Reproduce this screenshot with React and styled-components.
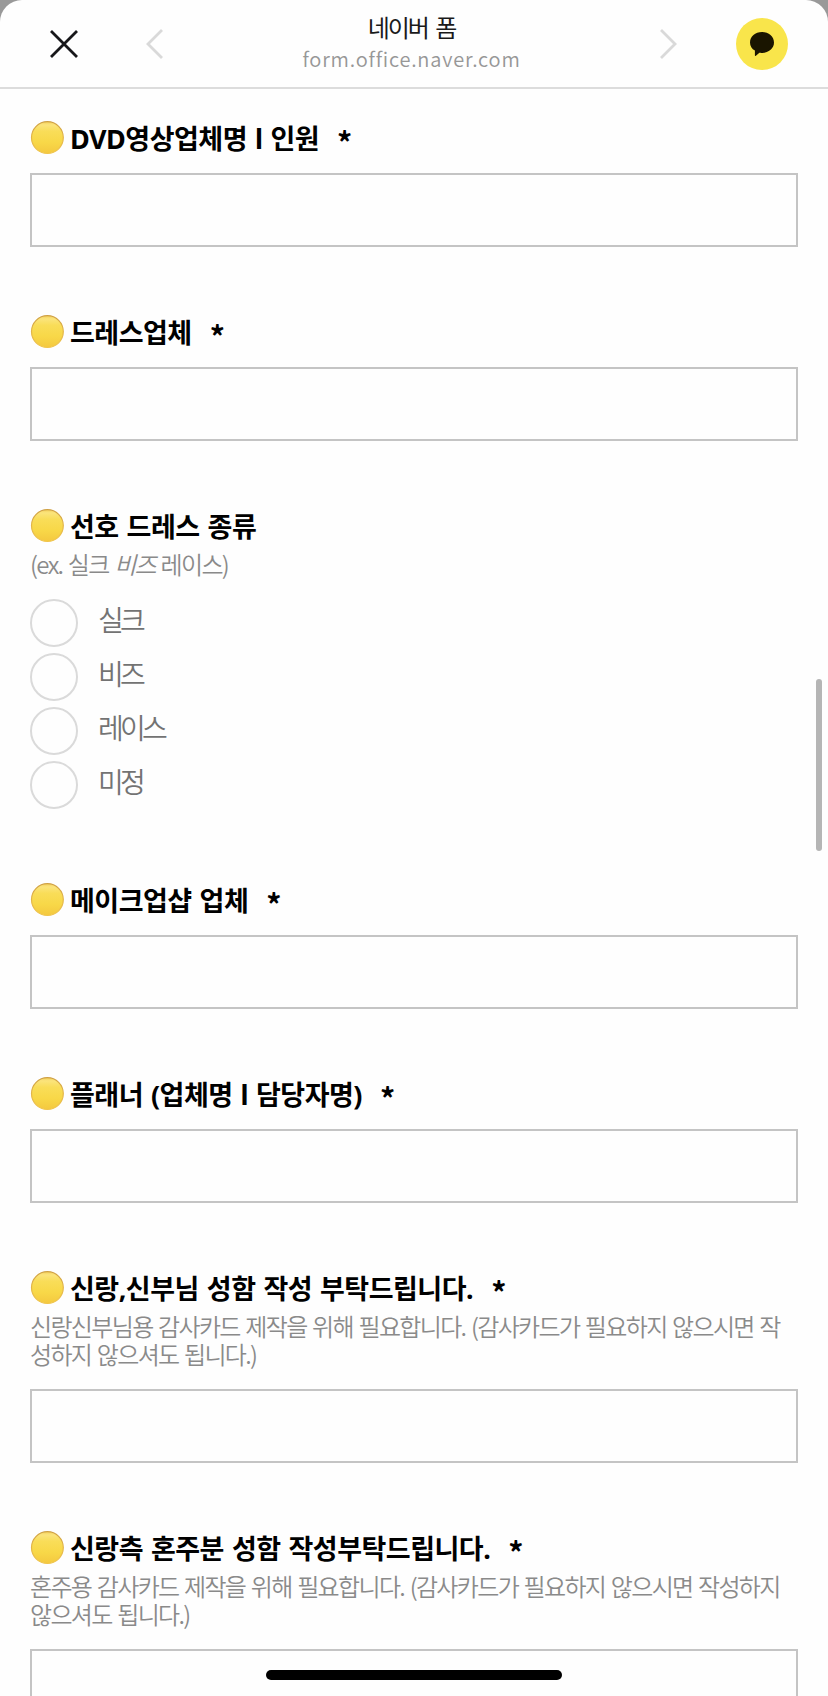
import React from 'react';
import styled, { createGlobalStyle } from 'styled-components';

const fields = [
  { title: 'DVD영상업체명 l 인원', required: true, input: true },
  { title: '드레스업체', required: true, input: true },
  {
    title: '선호 드레스 종류',
    hint: (
      <>
        (ex. 실크 <em>비즈</em> 레이스)
      </>
    ),
    options: ['실크', '비즈', '레이스', '미정'],
  },
  { title: '메이크업샵 업체', required: true, input: true },
  { title: '플래너 (업체명 l 담당자명)', required: true, input: true },
  {
    title: '신랑,신부님 성함 작성 부탁드립니다.',
    hint: (
      <>
        신랑신부님용 감사카드 제작을 위해 필요합니다. (감사카드가 필요하지 않으시면 작
        <br />
        성하지 않으셔도 됩니다.)
      </>
    ),
    required: true,
    input: true,
  },
  {
    title: '신랑측 혼주분 성함 작성부탁드립니다.',
    hint: (
      <>
        혼주용 감사카드 제작을 위해 필요합니다. (감사카드가 필요하지 않으시면 작성하지
        <br />
        않으셔도 됩니다.)
      </>
    ),
    required: true,
    input: true,
  },
];

const YellowDot = () => (
  <StDot viewBox="0 0 34 34">
    <defs>
      <linearGradient id="dotFill" x1="0" y1="0" x2="0" y2="1">
        <stop offset="0" stopColor="#f3d05a" />
        <stop offset="0.1" stopColor="#fbe47c" />
        <stop offset="0.3" stopColor="#f9dd58" />
        <stop offset="0.65" stopColor="#f8d848" />
        <stop offset="1" stopColor="#f4c83f" />
      </linearGradient>
      <linearGradient id="dotEdge" x1="0" y1="0" x2="0" y2="1">
        <stop offset="0" stopColor="#cfa043" />
        <stop offset="0.6" stopColor="#e6b94a" />
        <stop offset="1" stopColor="#f0c54c" />
      </linearGradient>
    </defs>
    <circle
      cx="17.4"
      cy="16.6"
      r="15.9"
      fill="url(#dotFill)"
      stroke="url(#dotEdge)"
      strokeWidth="1.2"
    />
  </StDot>
);

const Field = ({ title, hint, required, input, options }) => (
  <StField>
    <StTitleRow>
      <YellowDot />
      <StTitle>{title}</StTitle>
      {required && <StRequired>*</StRequired>}
    </StTitleRow>
    {hint && <StHint>{hint}</StHint>}
    {input && <StInput type="text" $hinted={Boolean(hint)} />}
    {options && (
      <StOptions>
        {options.map(option => (
          <StOption key={option}>
            <StRadio />
            <StOptionLabel>{option}</StOptionLabel>
          </StOption>
        ))}
      </StOptions>
    )}
  </StField>
);

const App = () => (
  <>
    <GlobalStyle />
    <StScreen>
      <StSheet>
        <StHeader>
          <StCloseIcon viewBox="0 0 28 28">
            <path d="M1 1L27 27M27 1L1 27" />
          </StCloseIcon>
          <StArrowIcon viewBox="0 0 18 30">
            <path d="M16 1L2 15L16 29" />
          </StArrowIcon>
          <StHeading>
            <StPageName>네이버 폼</StPageName>
            <StAddress>form.office.naver.com</StAddress>
          </StHeading>
          <StArrowIcon viewBox="0 0 18 30">
            <path d="M2 1L16 15L2 29" />
          </StArrowIcon>
          <StTalkButton>
            <svg width="24" height="24" viewBox="0 0 24 24">
              <path
                d="M12 0C5.2 0 0 4.5 0 10.4C0 14 1.9 16.8 4.9 18.6V23.4Q5.1 24.2 5.9 23.7L9.4 20.8C17.7 21.6 24 17 24 10.4C24 4.5 18.8 0 12 0Z"
                fill="#1a1500"
              />
            </svg>
          </StTalkButton>
        </StHeader>
        <StForm>
          {fields.map(field => (
            <Field key={field.title} {...field} />
          ))}
        </StForm>
      </StSheet>
      <StScrollThumb />
      <StHomeBar />
    </StScreen>
  </>
);

const GlobalStyle = createGlobalStyle`
  * {
    box-sizing: border-box;
  }
  body {
    margin: 0;
    overflow: hidden;
    font-family: 'Noto Sans CJK KR', sans-serif;
  }
`;

const StScreen = styled.div`
  position: relative;
  width: 828px;
  height: 1696px;
  overflow: hidden;
  background: #999;
`;

const StSheet = styled.div`
  height: 100%;
  overflow: hidden;
  border-radius: 22px 22px 0 0;
  background: #fefefe;
`;

const StHeader = styled.header`
  display: flex;
  align-items: center;
  height: 89px;
  padding: 0 40px 0 50px;
  border-bottom: 2px solid #dcdcdc;
`;

const StCloseIcon = styled.svg`
  width: 28px;
  height: 28px;
  margin-right: 68px;
  fill: none;
  stroke: #17171a;
  stroke-width: 2.8;
`;

const StArrowIcon = styled.svg`
  width: 18px;
  height: 30px;
  fill: none;
  stroke: #d9d9d9;
  stroke-width: 2.8;
`;

const StHeading = styled.div`
  flex: 1;
  display: flex;
  flex-direction: column;
  align-items: center;
`;

const StPageName = styled.div`
  font-size: 24px;
  line-height: 30px;
  letter-spacing: -2px;
  word-spacing: 4px;
  color: #1a1a1a;
`;

const StAddress = styled.div`
  padding-top: 1px;
  font-size: 20px;
  font-weight: 350;
  line-height: 32px;
  letter-spacing: 0.8px;
  color: #979797;
`;

const StTalkButton = styled.div`
  display: flex;
  align-items: center;
  justify-content: center;
  width: 52px;
  height: 52px;
  margin-left: 59px;
  border-radius: 50%;
  background: #f9e54b;
`;

const StForm = styled.main`
  display: flex;
  flex-direction: column;
  padding: 32px 30px 0;
`;

const StField = styled.section`
  flex: none;
  margin-bottom: 68px;
`;

const StTitleRow = styled.div`
  display: flex;
  align-items: center;
  height: 34px;
`;

const StDot = styled.svg`
  flex: none;
  width: 34px;
  height: 34px;
  margin-right: 6px;
`;

const StTitle = styled.h2`
  margin: 2px 0 0;
  font-family: 'Noto Sans', 'Noto Sans CJK KR', sans-serif;
  font-size: 27px;
  font-weight: 700;
  line-height: 34px;
  letter-spacing: -0.5px;
  word-spacing: 1.4px;
  white-space: nowrap;
  color: #000;
`;

const StRequired = styled.span`
  margin: 6px 0 0 18px;
  font-size: 30px;
  font-weight: 700;
  line-height: 34px;
`;

const StHint = styled.p`
  margin: 7px 0 0;
  font-size: 24px;
  font-weight: 350;
  line-height: 28px;
  letter-spacing: -1.65px;
  word-spacing: 1.8px;
  white-space: nowrap;
  color: #8a8a8a;
`;

const StInput = styled.input`
  display: block;
  width: 768px;
  height: 74px;
  margin-top: ${({ $hinted }) => ($hinted ? '21px' : '18px')};
  padding: 0 20px;
  border: 2px solid #c4c4c4;
  border-radius: 0;
  background: #fefefe;
`;

const StOptions = styled.div`
  display: flex;
  flex-direction: column;
  gap: 6px;
  margin: 21px 0 6px;
`;

const StOption = styled.label`
  display: flex;
  align-items: center;
  height: 48px;
`;

const StRadio = styled.span`
  width: 48px;
  height: 48px;
  margin-right: 20px;
  border: 2px solid #dadada;
  border-radius: 50%;
`;

const StOptionLabel = styled.span`
  padding-bottom: 8px;
  font-size: 28px;
  font-weight: 350;
  line-height: 40px;
  letter-spacing: -3.8px;
  color: #737373;
`;

const StScrollThumb = styled.div`
  position: absolute;
  top: 679px;
  right: 6px;
  width: 6px;
  height: 172px;
  border-radius: 3px;
  background: #b5b5b5;
`;

const StHomeBar = styled.div`
  position: absolute;
  left: 266px;
  bottom: 16px;
  width: 296px;
  height: 10px;
  border-radius: 5px;
  background: #000;
`;

export default App;
